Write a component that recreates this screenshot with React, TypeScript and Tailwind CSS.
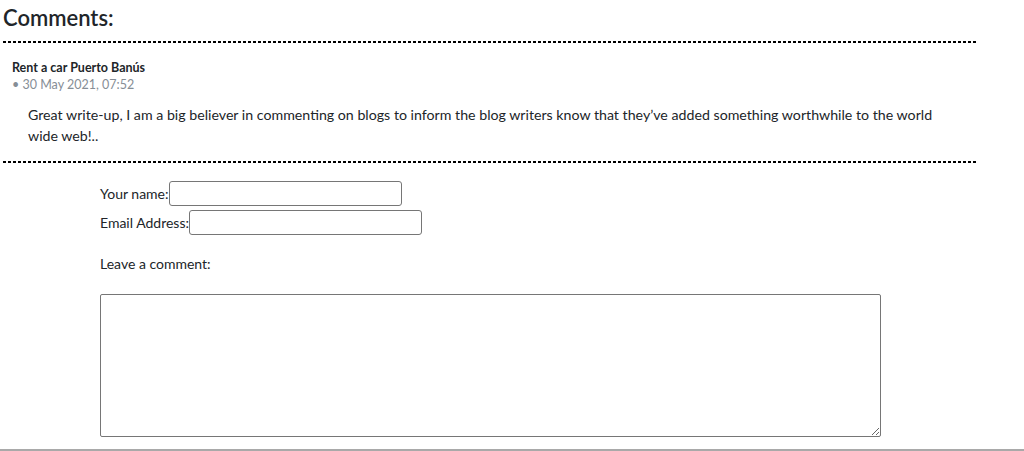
import React from "react";

export default function App() {
  const font = { fontFamily: '"Lato", "Open Sans", sans-serif' };
  return (
    <div className="w-[1024px] h-[451px] bg-white overflow-hidden flex flex-col" style={font}>
      <div className="w-[975px] ml-[3px] text-[#212529]">
        <h2 className="text-[22px] leading-[26px] pt-[5px] pb-[10px] font-semibold">Comments:</h2>
        <div className="h-[2px] bg-[repeating-linear-gradient(90deg,#000_0px,#000_3px,transparent_3px,transparent_5px)]" />
        <div className="pl-[9px] pt-[17px] pb-[15px]">
          <div className="text-[12.5px] leading-[16px] font-bold">Rent a car Puerto Banús</div>
          <div className="text-[12.5px] leading-[17px] text-[#868e96]">• 30 May 2021, 07:52</div>
          <p className="pl-[16px] pr-[38px] pt-[11px] text-[14.2px] leading-[21px]">
            Great write-up, I am a big believer in commenting on blogs to inform the blog writers know that they’ve added something worthwhile to the world wide web!..
          </p>
        </div>
        <div className="h-[2px] bg-[repeating-linear-gradient(90deg,#000_0px,#000_3px,transparent_3px,transparent_5px)]" />
      </div>
      <form className="pl-[100px] pt-[18px] text-[14px] text-[#212529] flex flex-col">
        <div className="flex items-center h-[24px]">
          <label>Your name:</label>
          <input className="w-[233px] h-[25px] border border-[#767676] rounded-[3px]" />
        </div>
        <div className="flex items-center h-[24px] mt-[5px]">
          <label>Email Address:</label>
          <input className="w-[233px] h-[25px] border border-[#767676] rounded-[3px]" />
        </div>
        <div className="mt-[20px] leading-[20px]">Leave a comment:</div>
        <textarea className="mt-[20px] w-[781px] h-[143px] border border-[#767676] rounded-[2px]" />
      </form>
      <div className="mt-auto border-b-2 border-[#a9a9a9]" />
    </div>
  );
}
